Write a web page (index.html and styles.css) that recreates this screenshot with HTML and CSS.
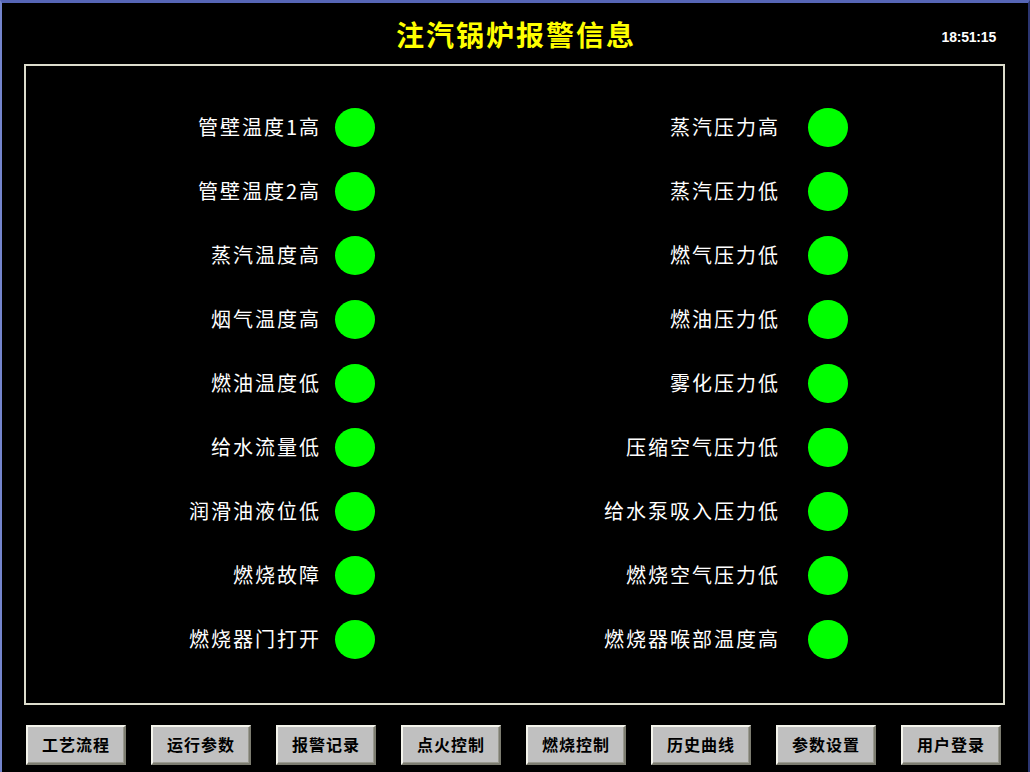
FILE: index.html
```html
<!DOCTYPE html>
<html lang="zh">
<head>
<meta charset="utf-8">
<title>注汽锅炉报警信息</title>
<link rel="stylesheet" href="styles.css">
</head>
<body>
<div class="screen">
  <header class="header">
    <div></div>
    <h1 class="title">注汽锅炉报警信息</h1>
    <div class="clock">18:51:15</div>
  </header>
  <main class="panel">
    <div class="grid">
      <div class="label">管壁温度1高</div><div class="lamp"></div><div class="label r">蒸汽压力高</div><div class="lamp"></div>
      <div class="label">管壁温度2高</div><div class="lamp"></div><div class="label r">蒸汽压力低</div><div class="lamp"></div>
      <div class="label">蒸汽温度高</div><div class="lamp"></div><div class="label r">燃气压力低</div><div class="lamp"></div>
      <div class="label">烟气温度高</div><div class="lamp"></div><div class="label r">燃油压力低</div><div class="lamp"></div>
      <div class="label">燃油温度低</div><div class="lamp"></div><div class="label r">雾化压力低</div><div class="lamp"></div>
      <div class="label">给水流量低</div><div class="lamp"></div><div class="label r">压缩空气压力低</div><div class="lamp"></div>
      <div class="label">润滑油液位低</div><div class="lamp"></div><div class="label r">给水泵吸入压力低</div><div class="lamp"></div>
      <div class="label">燃烧故障</div><div class="lamp"></div><div class="label r">燃烧空气压力低</div><div class="lamp"></div>
      <div class="label">燃烧器门打开</div><div class="lamp"></div><div class="label r">燃烧器喉部温度高</div><div class="lamp"></div>
    </div>
  </main>
  <nav class="buttons">
    <button class="btn">工艺流程</button>
    <button class="btn">运行参数</button>
    <button class="btn">报警记录</button>
    <button class="btn">点火控制</button>
    <button class="btn">燃烧控制</button>
    <button class="btn">历史曲线</button>
    <button class="btn">参数设置</button>
    <button class="btn">用户登录</button>
  </nav>
</div>
</body>
</html>
```

FILE: styles.css
```css
html, body {
  margin: 0;
  padding: 0;
  background: #000;
}
.screen {
  width: 1026px;
  height: 769px;
  background: #000;
  border-top: 3px solid #5666b6;
  border-left: 2px solid #7484cc;
  border-right: 2px solid #2c3672;
  overflow: hidden;
  font-family: "Noto Sans CJK SC", "Liberation Sans", sans-serif;
}
.header {
  height: 61px;
  display: grid;
  grid-template-columns: 1fr auto 1fr;
  align-items: center;
}
.title {
  margin: 0;
  color: #ffff00;
  font-size: 28px;
  font-weight: bold;
  letter-spacing: 2px;
  line-height: 1;
  padding-left: 2px;
}
.clock {
  justify-self: end;
  padding-right: 32px;
  padding-top: 6px;
  color: #fff;
  font-family: "Liberation Sans", Arial, sans-serif;
  font-weight: bold;
  font-size: 14px;
  letter-spacing: -0.2px;
}
.panel {
  margin-left: 22px;
  width: 977px;
  height: 637px;
  border: 2px solid #dcdccc;
}
.grid {
  display: grid;
  grid-template-columns: 309px 40px 433px 40px;
  grid-auto-rows: 64px;
  padding-top: 29px;
  align-items: center;
}
.label {
  color: #fff;
  font-size: 20px;
  letter-spacing: 2px;
  text-align: right;
  padding-right: 14px;
  line-height: 1;
  white-space: nowrap;
}
.label.r {
  padding-right: 28px;
}
.lamp {
  width: 40px;
  height: 39px;
  border-radius: 50%;
  background: #00ff00;
}
.buttons {
  display: flex;
  gap: 25px;
  padding-left: 24px;
  margin-top: 20px;
}
.btn {
  width: 100px;
  height: 40px;
  box-sizing: border-box;
  background: #c0c0c0;
  border: 2px solid;
  border-color: #f4f4ec #7c7c70 #7c7c70 #f4f4ec;
  box-shadow: inset -1px -1px 0 #9a9a90;
  font-family: "Noto Sans CJK SC", "Liberation Sans", sans-serif;
  font-size: 16px;
  font-weight: bold;
  letter-spacing: 1px;
  color: #000;
  padding: 0 0 2px 0;
  line-height: 1;
}
```
